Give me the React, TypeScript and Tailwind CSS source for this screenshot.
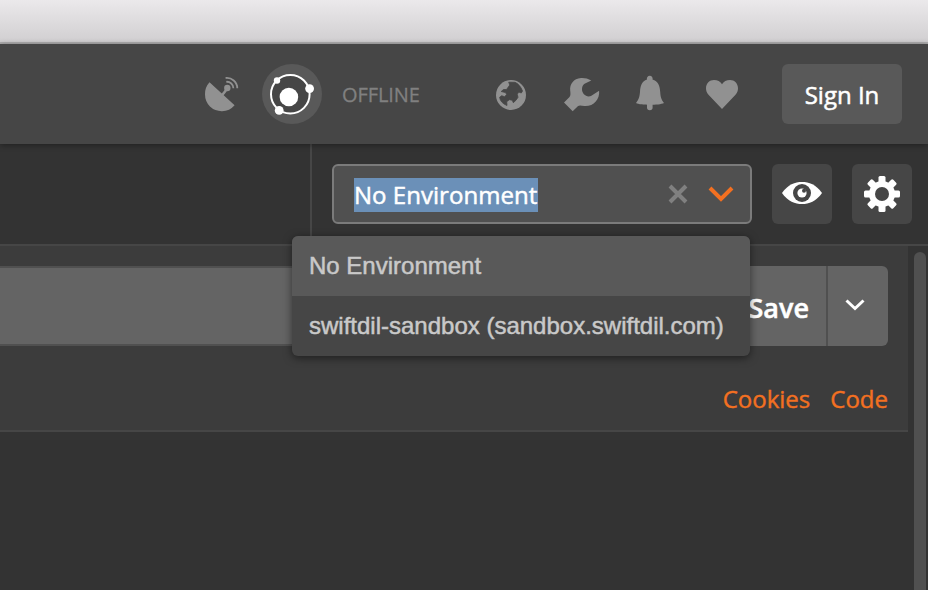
import React from "react";

function Dish() {
  return (
    <svg className="h-[38px] w-[36px]" viewBox="204 74 36 38" fill="#919191" stroke="none">
      <path d="M209.500 82.300 A17.100 17.100 0 0 0 205 94.500 A16.600 16.600 0 0 0 222 111.200 A17.100 17.100 0 0 0 234.600 105.200 Z" />
      <path d="M221 96.500 L227 89" stroke="#919191" strokeWidth="2.600" />
      <circle cx="227.300" cy="88" r="3.200" />
      <path d="M226.300 81.800 A6.500 6.500 0 0 1 233.400 88.300" fill="none" stroke="#919191" strokeWidth="1.800" />
      <path d="M225.600 78 A10.500 10.500 0 0 1 237.300 88.200" fill="none" stroke="#919191" strokeWidth="1.800" />
    </svg>
  );
}

function Orbit() {
  return (
    <svg className="size-[60px]" viewBox="262 64 60 60" fill="#fff">
      <circle cx="292" cy="94" r="30" fill="#595959" />
      <circle cx="290.300" cy="94.200" r="19.300" fill="#464646" stroke="#fff" strokeWidth="2" />
      <circle cx="288.900" cy="97" r="9.300" />
      <circle cx="277" cy="80.500" r="3.200" />
      <circle cx="309.600" cy="88.600" r="4.400" />
      <circle cx="279.200" cy="110.400" r="4.400" />
    </svg>
  );
}

function Globe() {
  return (
    <svg className="size-[30px]" viewBox="496 80 30 30">
      <circle cx="511" cy="95" r="15" fill="#919191" />
      <path
        d="M508.700 82.200 L515 82.300 Q520 84.500 522.500 91 L521.300 93 L518.700 92 L517.300 94.300 L518 97.300 L516 100.200 L513.300 102.700 L512.300 100.200 L509.300 99.700 L506.700 101.700 L507 105.500 Q500.500 103 499.600 97.300 L501.700 95.700 L504.700 96.800 L506.700 94.300 L505.300 92.500 L501.200 91.500 L503.500 89.500 L506.500 89.500 L509.800 85 Z"
        fill="#464646"
        stroke="#464646"
        strokeWidth="0.800"
        strokeLinejoin="round"
      />
    </svg>
  );
}

function Wrench() {
  return (
    <svg className="h-[36px] w-[38px]" viewBox="563 76 38 36">
      <path d="M591.300 80.500 C588 78.500 584.500 77.800 581 78 C573.500 78.500 569.500 84.500 570.200 90.500 C570.500 93.500 570.800 95.500 569.500 97 L564 102.600 L572.700 111.200 L577.800 106.300 C579.500 104.800 581.500 105.800 584.500 106 C593.500 106.500 600 99.500 599.100 90.700 L591 96 C586.500 98 581.800 93.500 582 89 C582 86 583.500 84.500 585 83.600 Z" fill="#919191" />
    </svg>
  );
}

function Bell() {
  return (
    <svg className="h-[36px] w-[30px]" viewBox="635 75 30 36" fill="#919191">
      <path d="M647 79.500 A2.900 2.900 0 1 1 652.500 79.500 C658 81 660 86 660.200 92 C660.500 98 662 100.500 664 103 C659 105.500 640.500 105.500 636 103 C638 100.500 639.500 98 640 92 C640.200 86 642 81 647 79.500 Z" />
      <path d="M647 104 H652.600 V107.500 A2.800 2.800 0 0 1 647 107.500 Z" />
    </svg>
  );
}

function Heart() {
  return (
    <svg className="h-[30px] w-[34px]" viewBox="705 79 34 30" fill="#919191">
      <path d="M722 109 L708.500 94.800 C706.800 92.800 706 91 706 88.300 C706 83.500 709.500 80 714 80 C717.500 80 720.500 81.500 722 84.300 C723.500 81.500 726.500 80 730 80 C734.500 80 738 83.500 738 88.300 C738 91 737.200 92.800 735.500 94.800 Z" />
    </svg>
  );
}

function Eye() {
  return (
    <svg className="-mt-[2px] h-[24px] w-[40px]" viewBox="782 181 40 24">
      <path d="M782 193 C788 184.500 795 182 802 182 C809 182 816 184.500 822 193 C816 201.500 809 204 802 204 C795 204 788 201.500 782 193 Z" fill="#fff" />
      <circle cx="802" cy="193" r="9" fill="#464646" />
      <circle cx="802" cy="193" r="4.600" fill="#fff" />
      <circle cx="804" cy="190.800" r="2" fill="#464646" />
    </svg>
  );
}

function Gear() {
  return (
    <svg className="size-[38px]" viewBox="-19 -19 38 38" fill="#fff">
      {[0, 45, 90, 135].map((angle) => (
        <rect key={angle} x="-3.500" y="-18" width="7" height="36" rx="1.500" transform={`rotate(${angle})`} />
      ))}
      <circle r="13" />
      <circle r="7" fill="#464646" />
    </svg>
  );
}

export default function App() {
  return (
    <div className="flex h-[590px] w-[928px] flex-col overflow-hidden bg-[#333] font-['Open_Sans',sans-serif] text-[24px]">
      <div className="h-[44px] shrink-0 border-b-2 border-[#b0afb0] bg-linear-to-b from-[#ebe9eb] to-[#d1cfd1]" />
      <header className="relative flex h-[100px] shrink-0 items-center bg-[#464646] pl-[204px] shadow-[0_1px_6px_rgba(0,0,0,0.4)]">
        <div className="-mt-[2px]"><Dish /></div>
        <div className="ml-[22px]"><Orbit /></div>
        <span className="ml-[20px] w-[79px] pt-[2px] text-[20px] tracking-[-0.1px] whitespace-nowrap text-[#808080] [-webkit-text-stroke:0.3px]">OFFLINE</span>
        <div className="ml-[75px] mt-[2px]"><Globe /></div>
        <div className="ml-[37px]"><Wrench /></div>
        <div className="ml-[34px] -mt-[2px]"><Bell /></div>
        <div className="ml-[40px]"><Heart /></div>
        <button className="ml-[43px] h-[60px] w-[120px] rounded-[6px] bg-[#595959] pt-[2px] text-white [-webkit-text-stroke:0.5px]">Sign In</button>
      </header>
      <section className="flex h-[102px] shrink-0 border-b-2 border-[#464646]">
        <div className="w-[312px] border-r-2 border-[#464646]" />
        <div className="relative flex flex-1 items-start gap-5 pt-5 pl-5">
          <div className="flex h-[60px] w-[420px] items-center rounded-[6px] border-2 border-[#7b7b7b] bg-[#505050] pr-[16px] pl-[20px] text-white">
            <span className="mt-[2px] h-[34px] w-[184px] bg-[#6b90b8] leading-[34px] tracking-[0.04px] whitespace-nowrap [-webkit-text-stroke:0.5px]">No Environment</span>
            <svg className="ml-auto size-[20px]" viewBox="0 0 20 20" stroke="#808080" strokeWidth="4"><path d="M2 2 L18 18 M18 2 L2 18" /></svg>
            <svg className="ml-[20px] h-[18px] w-[26px]" viewBox="0 0 26 18" fill="none" stroke="#f37021" strokeWidth="4"><path d="M2 3 L13 14 L24 3" /></svg>
          </div>
          <button className="flex size-[60px] items-center justify-center rounded-[6px] bg-[#464646]"><Eye /></button>
          <button className="flex size-[60px] items-center justify-center rounded-[6px] bg-[#464646]"><Gear /></button>
          <ul className="absolute top-[92px] -left-[20px] z-10 w-[458px] overflow-hidden rounded-[6px] bg-[#464646] font-['Liberation_Sans',sans-serif] text-[#c9c9c9] shadow-[0_2px_8px_rgba(0,0,0,0.5)] [-webkit-text-stroke:0.5px]">
            <li className="h-[60px] bg-[#595959] pl-[17px] leading-[60px] whitespace-nowrap">No Environment</li>
            <li className="h-[60px] pl-[17px] leading-[60px] whitespace-nowrap">swiftdil-sandbox (sandbox.swiftdil.com)</li>
          </ul>
        </div>
      </section>
      <main className="flex flex-1">
        <div className="w-[908px]">
          <div className="h-[186px] border-b-2 border-[#464646] bg-[#3c3c3c] pt-5">
            <div className="flex h-[80px] pr-5">
              <div className="flex-1 border-y-2 border-[#505050] bg-[#646464]" />
              <button className="w-[126px] border-r-2 border-[#505050] bg-[#646464] pt-[4px] pr-[17px] text-right text-[27px] font-semibold text-white [-webkit-text-stroke:0.5px]">Save</button>
              <button className="flex w-[60px] items-center rounded-r-[6px] bg-[#646464] pl-[17px]">
                <svg className="-mt-[3px] h-[14px] w-[20px]" viewBox="0 0 20 14" fill="none" stroke="#fff" strokeWidth="3"><path d="M1.500 2.500 L10 10.500 L18.500 2.500" /></svg>
              </button>
            </div>
            <div className="mt-[36px] flex justify-end gap-5 pr-5 leading-[34px] text-[#f37021] [-webkit-text-stroke:0.4px]"><span>Cookies</span><span>Code</span></div>
          </div>
        </div>
        <div className="flex w-[20px] pt-[6px] pl-[6px]"><div className="w-[12px] rounded-t-full bg-[#505050]" /></div>
      </main>
    </div>
  );
}
